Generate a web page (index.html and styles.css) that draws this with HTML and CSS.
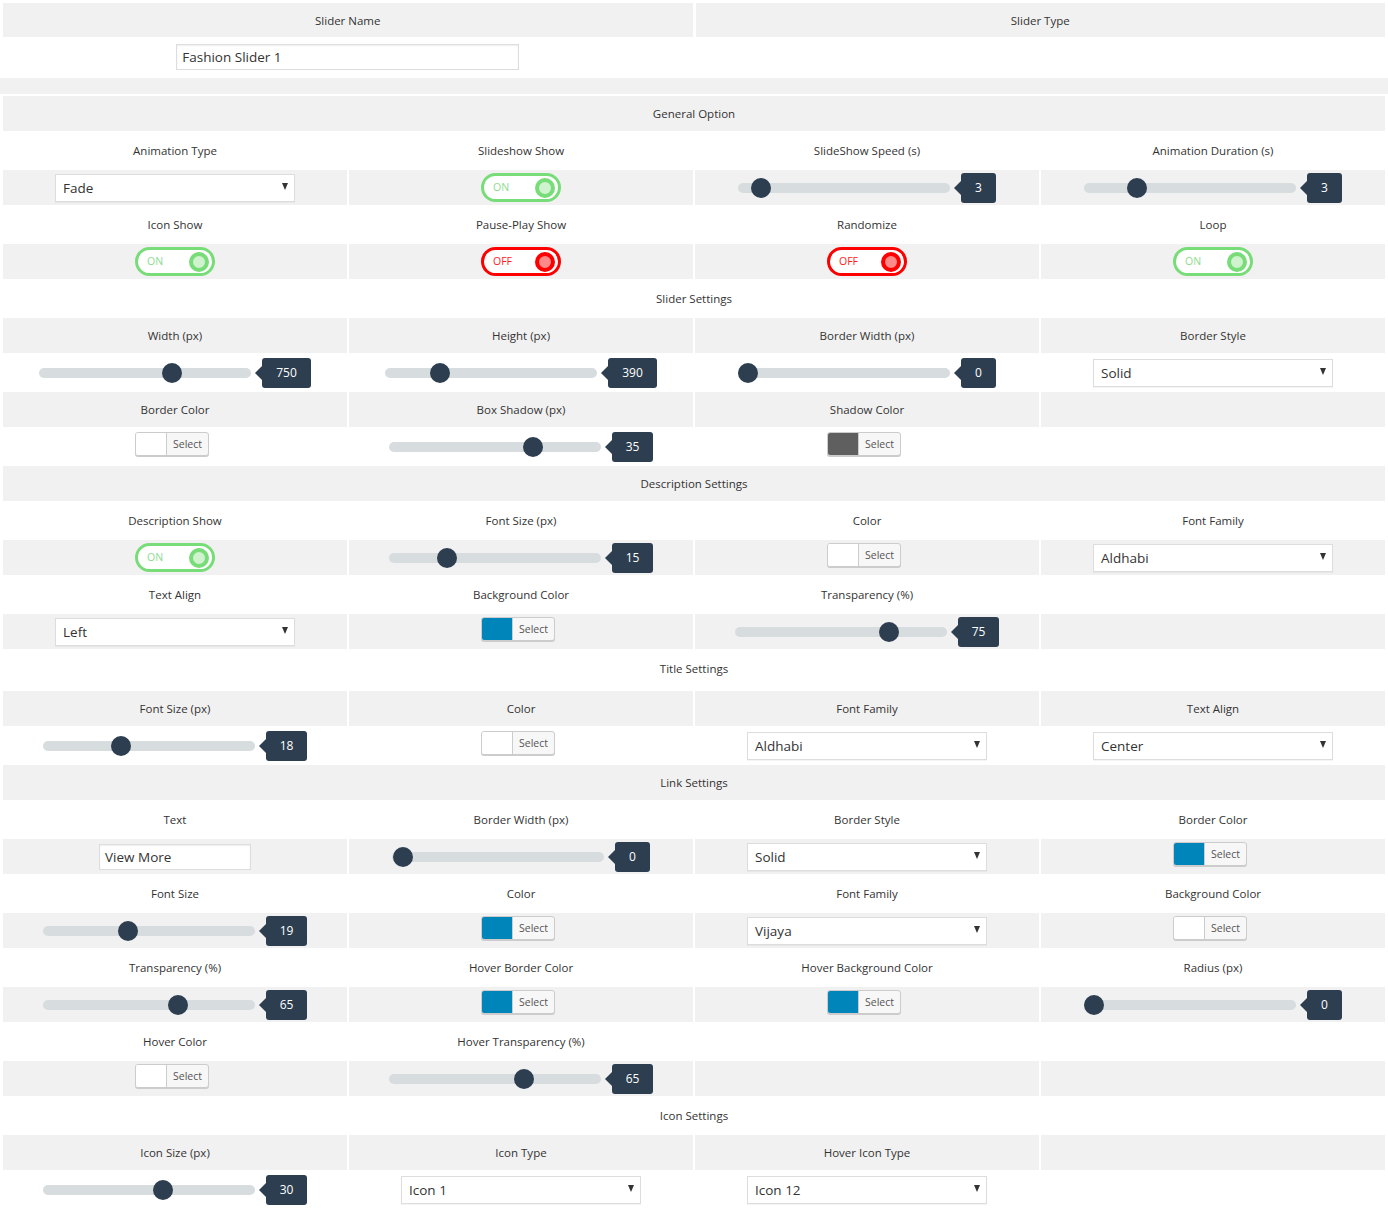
FILE: index.html
```html
<!DOCTYPE html>
<html>
<head>
<meta charset="utf-8">
<link rel="stylesheet" href="styles.css">
</head>
<body>
<table class="grid top">
<tbody>
<tr class="hrow"><td>Slider Name</td><td>Slider Type</td></tr>
<tr><td><div class="txt wide">Fashion Slider 1</div></td><td></td></tr>
</tbody>
</table>
<div class="band"></div>
<table class="grid main">
<tbody>
<tr><td colspan="4">General Option</td></tr>
<tr><td>Animation Type</td><td>Slideshow Show</td><td>SlideShow Speed (s)</td><td>Animation Duration (s)</td></tr>
<tr>
<td><div class="sel">Fade<span class="arr"></span></div></td>
<td><div class="tog on"><span class="tl">ON</span><span class="knob"></span></div></td>
<td><div class="rs"><div class="track"><span class="thumb" style="left:13px"></span></div><span class="val">3</span></div></td>
<td><div class="rs"><div class="track"><span class="thumb" style="left:43px"></span></div><span class="val">3</span></div></td>
</tr>
<tr><td>Icon Show</td><td>Pause-Play Show</td><td>Randomize</td><td>Loop</td></tr>
<tr>
<td><div class="tog on"><span class="tl">ON</span><span class="knob"></span></div></td>
<td><div class="tog off"><span class="tl">OFF</span><span class="knob"></span></div></td>
<td><div class="tog off"><span class="tl">OFF</span><span class="knob"></span></div></td>
<td><div class="tog on"><span class="tl">ON</span><span class="knob"></span></div></td>
</tr>
<tr><td colspan="4">Slider Settings</td></tr>
<tr><td>Width (px)</td><td>Height (px)</td><td>Border Width (px)</td><td>Border Style</td></tr>
<tr>
<td><div class="rs"><div class="track"><span class="thumb" style="left:123px"></span></div><span class="val">750</span></div></td>
<td><div class="rs"><div class="track"><span class="thumb" style="left:45px"></span></div><span class="val">390</span></div></td>
<td><div class="rs"><div class="track"><span class="thumb" style="left:0px"></span></div><span class="val">0</span></div></td>
<td><div class="sel">Solid<span class="arr"></span></div></td>
</tr>
<tr><td>Border Color</td><td>Box Shadow (px)</td><td>Shadow Color</td><td></td></tr>
<tr>
<td><div class="cbtn"><span class="sw white"></span><span class="ct">Select</span></div></td>
<td><div class="rs"><div class="track"><span class="thumb" style="left:134px"></span></div><span class="val">35</span></div></td>
<td><div class="cbtn"><span class="sw grey"></span><span class="ct">Select</span></div></td>
<td></td>
</tr>
<tr><td colspan="4">Description Settings</td></tr>
<tr><td>Description Show</td><td>Font Size (px)</td><td>Color</td><td>Font Family</td></tr>
<tr>
<td><div class="tog on"><span class="tl">ON</span><span class="knob"></span></div></td>
<td><div class="rs"><div class="track"><span class="thumb" style="left:48px"></span></div><span class="val">15</span></div></td>
<td><div class="cbtn"><span class="sw white"></span><span class="ct">Select</span></div></td>
<td><div class="sel">Aldhabi<span class="arr"></span></div></td>
</tr>
<tr><td>Text Align</td><td>Background Color</td><td>Transparency (%)</td><td></td></tr>
<tr>
<td><div class="sel">Left<span class="arr"></span></div></td>
<td><div class="cbtn"><span class="sw blue"></span><span class="ct">Select</span></div></td>
<td><div class="rs"><div class="track"><span class="thumb" style="left:144px"></span></div><span class="val">75</span></div></td>
<td></td>
</tr>
<tr class="tall"><td colspan="4">Title Settings</td></tr>
<tr><td>Font Size (px)</td><td>Color</td><td>Font Family</td><td>Text Align</td></tr>
<tr>
<td><div class="rs"><div class="track"><span class="thumb" style="left:68px"></span></div><span class="val">18</span></div></td>
<td><div class="cbtn"><span class="sw white"></span><span class="ct">Select</span></div></td>
<td><div class="sel">Aldhabi<span class="arr"></span></div></td>
<td><div class="sel">Center<span class="arr"></span></div></td>
</tr>
<tr><td colspan="4">Link Settings</td></tr>
<tr><td>Text</td><td>Border Width (px)</td><td>Border Style</td><td>Border Color</td></tr>
<tr>
<td><div class="txt short">View More</div></td>
<td><div class="rs"><div class="track"><span class="thumb" style="left:1px"></span></div><span class="val">0</span></div></td>
<td><div class="sel">Solid<span class="arr"></span></div></td>
<td><div class="cbtn"><span class="sw blue"></span><span class="ct">Select</span></div></td>
</tr>
<tr><td>Font Size</td><td>Color</td><td>Font Family</td><td>Background Color</td></tr>
<tr>
<td><div class="rs"><div class="track"><span class="thumb" style="left:75px"></span></div><span class="val">19</span></div></td>
<td><div class="cbtn"><span class="sw blue"></span><span class="ct">Select</span></div></td>
<td><div class="sel">Vijaya<span class="arr"></span></div></td>
<td><div class="cbtn"><span class="sw white"></span><span class="ct">Select</span></div></td>
</tr>
<tr><td>Transparency (%)</td><td>Hover Border Color</td><td>Hover Background Color</td><td>Radius (px)</td></tr>
<tr>
<td><div class="rs"><div class="track"><span class="thumb" style="left:125px"></span></div><span class="val">65</span></div></td>
<td><div class="cbtn"><span class="sw blue"></span><span class="ct">Select</span></div></td>
<td><div class="cbtn"><span class="sw blue"></span><span class="ct">Select</span></div></td>
<td><div class="rs"><div class="track"><span class="thumb" style="left:0px"></span></div><span class="val">0</span></div></td>
</tr>
<tr><td>Hover Color</td><td>Hover Transparency (%)</td><td></td><td></td></tr>
<tr>
<td><div class="cbtn"><span class="sw white"></span><span class="ct">Select</span></div></td>
<td><div class="rs"><div class="track"><span class="thumb" style="left:125px"></span></div><span class="val">65</span></div></td>
<td></td>
<td></td>
</tr>
<tr><td colspan="4">Icon Settings</td></tr>
<tr><td>Icon Size (px)</td><td>Icon Type</td><td>Hover Icon Type</td><td></td></tr>
<tr>
<td><div class="rs"><div class="track"><span class="thumb" style="left:110px"></span></div><span class="val">30</span></div></td>
<td><div class="sel">Icon 1<span class="arr"></span></div></td>
<td><div class="sel">Icon 12<span class="arr"></span></div></td>
<td></td>
</tr>
</tbody>
</table>
</body>
</html>
```

FILE: styles.css
```css
html, body {
  margin: 0;
  padding: 0;
  background: #fff;
}
body {
  font-family: "Open Sans", "Noto Sans", sans-serif;
  font-size: 11.5px;
  color: #333;
}
.grid {
  width: 100%;
  border-collapse: separate;
  table-layout: fixed;
}
.top {
  border-spacing: 3px;
  margin: 0;
}
.main {
  width: calc(100% - 2px);
  margin: 0 1px;
  border-spacing: 2px;
}
.grid td {
  text-align: center;
  vertical-align: middle;
  padding: 0;
  height: 35px;
}
.grid tr:nth-child(odd) td {
  background: #f1f1f1;
}
.top .hrow td {
  height: 34px;
}
.main tr.tall td {
  height: 35px;
  padding-bottom: 3px;
}
.band {
  height: 16px;
  background: #f1f1f1;
}
.txt {
  display: inline-flex;
  align-items: center;
  box-sizing: border-box;
  height: 26px;
  border: 1px solid #ddd;
  background: #fff;
  box-shadow: inset 0 1px 2px rgba(0,0,0,0.07);
  font-size: 13.5px;
  color: #333;
  padding-left: 5px;
  text-align: left;
  vertical-align: middle;
}
.top .txt { margin-top: -1px; }
.txt.wide { width: 343px; }
.txt.short { width: 152px; }
.sel {
  display: inline-flex;
  align-items: center;
  justify-content: space-between;
  box-sizing: border-box;
  width: 240px;
  height: 28px;
  border: 1px solid #ddd;
  background: #fff;
  box-shadow: 0 1px 1px rgba(0,0,0,0.04);
  font-size: 13.5px;
  color: #333;
  padding: 1px 6px 0 7px;
  vertical-align: middle;
}
.arr {
  width: 0;
  height: 0;
  border-left: 3.5px solid transparent;
  border-right: 3.5px solid transparent;
  border-top: 7px solid #333;
  margin-bottom: 3px;
}
.tog {
  display: inline-flex;
  align-items: center;
  justify-content: space-between;
  box-sizing: border-box;
  width: 80px;
  height: 29px;
  border: 3px solid;
  border-radius: 15px;
  background: #fff;
  padding: 0 3px 0 9px;
  vertical-align: middle;
}
.tl {
  font-size: 10.5px;
  line-height: 1;
}
.knob {
  box-sizing: border-box;
  width: 20px;
  height: 20px;
  border-radius: 50%;
  border: 4px solid;
}
.tog.on { border-color: #78dd78; }
.tog.on .tl { color: #8edc8e; }
.tog.on .knob { border-color: #78dd78; background: #cff3cf; }
.tog.off { border-color: #ff0000; }
.tog.off .tl { color: #ff1a1a; }
.tog.off .knob { border-color: #ff0000; background: #ff8a8a; }
.rs {
  display: inline-flex;
  align-items: center;
  vertical-align: middle;
}
.track {
  position: relative;
  width: 212px;
  height: 10px;
  border-radius: 5px;
  background: #d7dcdf;
}
.thumb {
  position: absolute;
  top: -5px;
  width: 20px;
  height: 20px;
  border-radius: 50%;
  background: #2c3e50;
}
.val {
  position: relative;
  margin-left: 11px;
  height: 30px;
  line-height: 30px;
  padding: 0 14px;
  border-radius: 3px;
  background: #2c3e50;
  color: #fff;
  font-size: 12px;
}
.val::after {
  content: "";
  position: absolute;
  left: -7px;
  top: 8px;
  border-top: 7px solid transparent;
  border-bottom: 7px solid transparent;
  border-right: 7px solid #2c3e50;
}
.cbtn {
  display: inline-flex;
  box-sizing: border-box;
  width: 74px;
  height: 24px;
  margin: 0 6px 6px 0;
  border: 1px solid #ccc;
  border-radius: 3px;
  box-shadow: 0 1px 0 #ccc;
  background: #f7f7f7;
  overflow: hidden;
  vertical-align: middle;
}
.sw {
  width: 30px;
  height: 100%;
  border-right: 1px solid #ccc;
}
.sw.white { background: #fff; }
.sw.grey { background: #5f5f5f; }
.sw.blue { background: #0085ba; }
.ct {
  flex: 1;
  display: flex;
  align-items: center;
  justify-content: center;
  font-size: 10.5px;
  color: #555;
}
```
